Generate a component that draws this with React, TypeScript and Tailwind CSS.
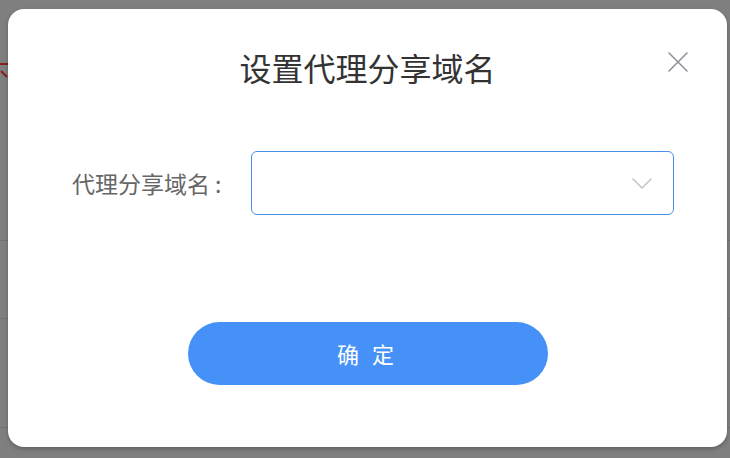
import { useState } from 'react';

const font = { fontFamily: '"Noto Sans CJK SC", "Noto Sans", sans-serif' };

const CloseIcon = () => (
  <svg width="20" height="20" viewBox="0 0 20 20" fill="none">
    <path d="M1 1L19 19M19 1L1 19" stroke="#909399" strokeWidth="1.6" strokeLinecap="round" />
  </svg>
);

const ChevronDown = () => (
  <svg width="20" height="11" viewBox="0 0 20 11" fill="none">
    <path d="M1 1L10 10L19 1" stroke="#c0c4cc" strokeWidth="1.5" strokeLinecap="round" strokeLinejoin="round" />
  </svg>
);

const App = () => {
  const [domain] = useState('');

  return (
    <div className="relative w-[730px] h-[458px] overflow-hidden bg-[#7f7f7f]" style={font}>
      {/* Page behind the mask */}
      <div className="flex flex-col">
        <div className="h-[60px]" />
        <svg width="12" height="20" viewBox="0 0 12 20" className="block">
          <path d="M0 4H12" stroke="#8a1c1c" strokeWidth="2" />
          <path d="M1 11L7 17" stroke="#8a1c1c" strokeWidth="2" />
        </svg>
        <div className="h-[161px] border-b border-[#737373]" />
        <div className="h-[78px] border-b border-[#737373]" />
        <div className="h-[109px] border-b border-[#737373]" />
      </div>

      {/* Dialog */}
      <div className="absolute left-[8px] top-[9px] w-[719px] h-[438px] bg-white rounded-[16px] shadow-[0_2px_4px_rgba(0,0,0,0.25)] flex flex-col pt-[38px]">
        <button className="absolute right-[39px] top-[43px] p-0">
          <CloseIcon />
        </button>

        <h2 className="h-10 leading-10 text-center text-[32px] text-[#333333] font-normal">设置代理分享域名</h2>

        <div className="mt-[64px] flex items-center pl-[64px]">
          <label className="w-[179px] text-[23px] leading-8 text-[#666666]">
            代理分享域名<span className="ml-[5px]">:</span>
          </label>
          <div className="w-[423px] h-[64px] rounded-[6px] border border-[#4a8fe8] flex items-center justify-between pl-4 pr-[21px]">
            <span className="text-[20px] text-[#333333]">{domain}</span>
            <ChevronDown />
          </div>
        </div>

        <button className="mt-[107px] mx-auto w-[360px] h-[63px] rounded-full bg-[#4691f8] text-white text-[22px] tracking-[4px]">
          确 定
        </button>
      </div>
    </div>
  );
};

export default App;
